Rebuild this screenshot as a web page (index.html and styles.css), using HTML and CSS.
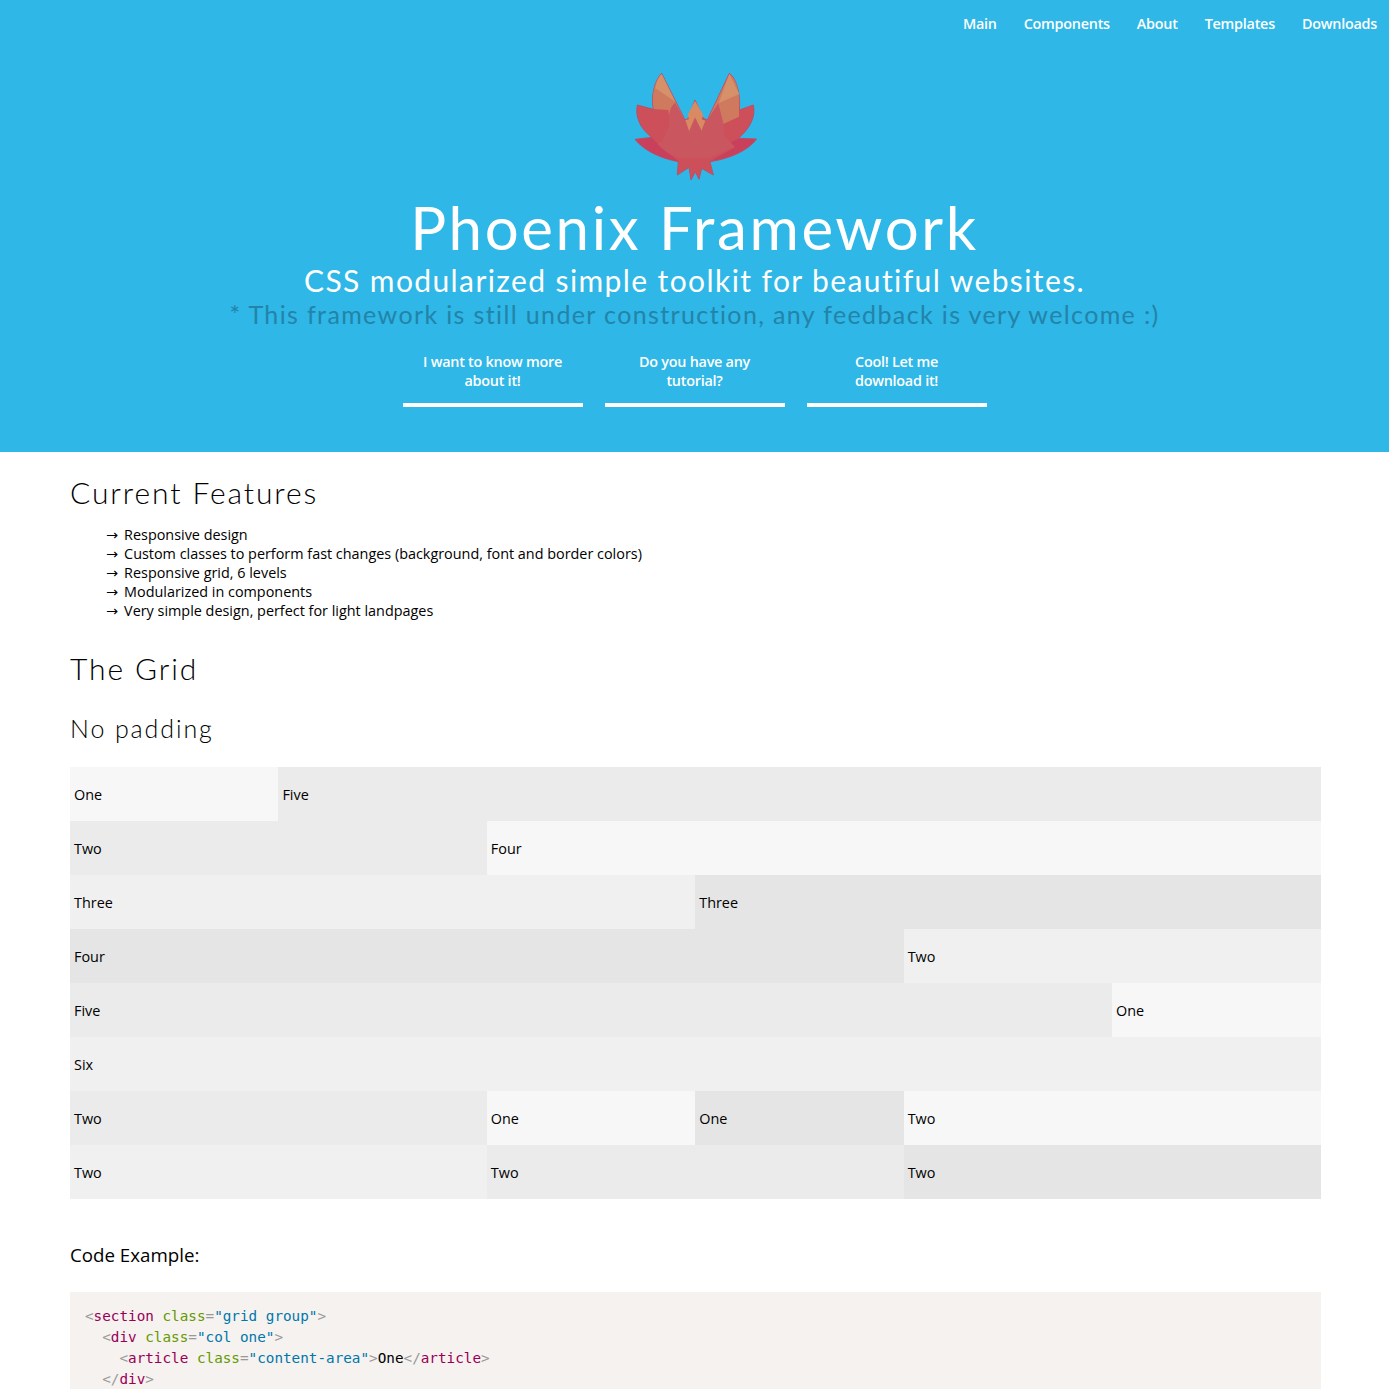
FILE: index.html
```html
<!DOCTYPE html>
<html>

<head>
	<meta charset="UTF-8">
	<title>Phoenix Framework</title>
	<link rel="stylesheet" href="styles.css">
</head>

<body>
	<header class="hero">
		<nav class="menu">
			<a href="#">Main</a>
			<a href="#">Components</a>
			<a href="#">About</a>
			<a href="#">Templates</a>
			<a href="#">Downloads</a>
		</nav>
		<svg class="logo" viewBox="0 0 450 390" width="150" height="130">
			<!-- base silhouette -->
			<path fill="#cd4f5a" stroke="#b8506a" stroke-width="3" stroke-linejoin="round" d="M125 40L195 180L205 175L225 120L250 175L262 180L328 40C350 55 362 105 358 150L400 135C408 170 390 205 355 235L410 237C385 270 335 295 270 305L280 345L245 325L237 358L226 335L213 360L207 322L172 345L175 305C120 295 70 270 45 238L95 232C60 205 45 170 52 135L100 148C92 105 105 60 125 40Z" />
			<!-- lower tips -->
			<path fill="#c8405c" d="M47 239L95 233L118 256L175 304C120 294 72 270 47 239ZM408 238L355 236L330 248L345 262L272 303C335 293 385 268 408 238Z" />
			<!-- wings -->
			<path fill="#cf7a5e" d="M125 42L193 178L148 175L145 150L101 147C93 105 105 60 125 42ZM328 42L264 178L310 192L357 170L357 150C362 105 350 55 328 42Z" />
			<path fill="#d6906a" d="M125 42L166 125L106 85C110 65 115 50 125 42ZM328 42L358 102L296 130Z" />
			<!-- body -->
			<path fill="#ca565f" d="M165 128C150 140 143 165 148 195L128 240L112 253C135 275 155 288 180 295L270 295C290 285 310 275 345 262L330 245L312 225L310 190L295 130L262 180L195 180Z" />
			<!-- crest -->
			<path fill="#d98a62" d="M225 122L250 165L245 178L256 182L243 215L225 180L208 215L196 180L207 178L203 165Z" />
			<path fill="#ca565f" d="M225 172L245 212L225 245L208 212Z" />
		</svg>
		<h1>Phoenix Framework</h1>
		<h2>CSS modularized simple toolkit for beautiful websites.</h2>
		<h3>* This framework is still under construction, any feedback is very welcome :)</h3>
		<div class="actions">
			<a href="#">I want to know more<br>about it!</a>
			<a href="#">Do you have any<br>tutorial?</a>
			<a href="#">Cool! Let me<br>download it!</a>
		</div>
	</header>

	<main class="content">
		<h2 class="section-title">Current Features</h2>
		<ul class="features">
			<li>Responsive design</li>
			<li>Custom classes to perform fast changes (background, font and border colors)</li>
			<li>Responsive grid, 6 levels</li>
			<li>Modularized in components</li>
			<li>Very simple design, perfect for light landpages</li>
		</ul>

		<h2 class="section-title grid-title">The Grid</h2>
		<h3 class="sub-title">No padding</h3>

		<section class="grid">
			<div class="col one c1">One</div>
			<div class="col five c2">Five</div>
			<div class="col two c2">Two</div>
			<div class="col four c1">Four</div>
			<div class="col three c3">Three</div>
			<div class="col three c4">Three</div>
			<div class="col four c4">Four</div>
			<div class="col two c3">Two</div>
			<div class="col five c2">Five</div>
			<div class="col one c1">One</div>
			<div class="col six c3">Six</div>
			<div class="col two c2">Two</div>
			<div class="col one c1">One</div>
			<div class="col one c4">One</div>
			<div class="col two c1">Two</div>
			<div class="col two c3">Two</div>
			<div class="col two c2">Two</div>
			<div class="col two c4">Two</div>
		</section>

		<h4 class="code-title">Code Example:</h4>
		<pre class="code"><code><i>&lt;</i><b>section</b> <u>class</u><i>=</i><s>"grid group"</s><i>&gt;</i>
  <i>&lt;</i><b>div</b> <u>class</u><i>=</i><s>"col one"</s><i>&gt;</i>
    <i>&lt;</i><b>article</b> <u>class</u><i>=</i><s>"content-area"</s><i>&gt;</i>One<i>&lt;/</i><b>article</b><i>&gt;</i>
  <i>&lt;/</i><b>div</b><i>&gt;</i></code></pre>
	</main>
</body>

</html>
```

FILE: styles.css
```css
html,
body {
	margin: 0;
	padding: 0;
}

body {
	font: 14.4px/19px "Open Sans", "Liberation Sans", sans-serif;
	color: #000;
	background: #fff;
}

a {
	text-decoration: none;
	color: #fff;
}

h1,
h2,
h3,
h4 {
	margin: 0;
	font-weight: 400;
}

.hero {
	background: #2eb7e7;
	height: 452px;
	box-sizing: border-box;
	padding-top: 14px;
	display: flex;
	flex-direction: column;
	align-items: center;
	color: #fff;
	overflow: hidden;
}

.menu {
	align-self: flex-end;
	display: flex;
	gap: 27px;
	padding-right: 12px;
	height: 20px;
	font-weight: 600;
	line-height: 20px;
	letter-spacing: -0.25px;
}

.logo {
	display: block;
	margin-top: 26px;
}

.hero h1 {
	font: 400 60px/70px Lato, "Open Sans", sans-serif;
	letter-spacing: 2.6px;
	margin-top: 2px;
}

.hero h2 {
	font: 400 30px/36px Lato, "Open Sans", sans-serif;
	letter-spacing: 1.4px;
}

.hero h3 {
	font: 400 25px/30px Lato, "Open Sans", sans-serif;
	letter-spacing: 1.37px;
	color: #2383a8;
	margin-top: 1px;
}

.actions {
	display: flex;
	gap: 22px;
	margin-top: 23px;
}

.actions a {
	width: 180px;
	box-sizing: border-box;
	border-bottom: 4px solid #fff;
	padding-bottom: 13px;
	text-align: center;
	font-weight: 600;
	letter-spacing: -0.25px;
}

.content {
	padding: 0 68px 0 70px;
}

.section-title {
	font: 300 30px/36px Lato, "Open Sans", sans-serif;
	letter-spacing: 1.9px;
	padding-top: 22px;
}

.features {
	list-style: none;
	margin: 15px 0 0;
	padding: 0 0 0 36px;
}

.features li::before {
	content: "\2192";
	margin-right: 6px;
	font-family: "DejaVu Sans", sans-serif;
	line-height: 1;
}

.grid-title {
	padding-top: 30px;
}

.sub-title {
	font: 300 25px/30px Lato, "Open Sans", sans-serif;
	letter-spacing: 1.9px;
	margin-top: 27px;
}

.grid {
	display: grid;
	grid-template-columns: repeat(5, 16.66%) 1fr;
	margin-top: 24px;
}

.col {
	height: 54px;
	line-height: 56px;
	padding-left: 4px;
}

.one { grid-column: span 1; }
.two { grid-column: span 2; }
.three { grid-column: span 3; }
.four { grid-column: span 4; }
.five { grid-column: span 5; }
.six { grid-column: span 6; }

.c1 { background: #f7f7f7; }
.c2 { background: #ebebeb; }
.c3 { background: #f0f0f0; }
.c4 { background: #e5e5e5; }

.code-title {
	font-size: 18.72px;
	line-height: 24px;
	margin-top: 44px;
}

.code {
	margin: 25px 0 0;
	padding: 14px 15px 0;
	height: 83px;
	background: #f5f2f0;
	overflow: hidden;
	font: 14.3px/21px "DejaVu Sans Mono", monospace;
}

.code i {
	font-style: normal;
	color: #999;
}

.code b {
	font-weight: 400;
	color: #905;
}

.code u {
	text-decoration: none;
	color: #690;
}

.code s {
	text-decoration: none;
	color: #07a;
}
```
